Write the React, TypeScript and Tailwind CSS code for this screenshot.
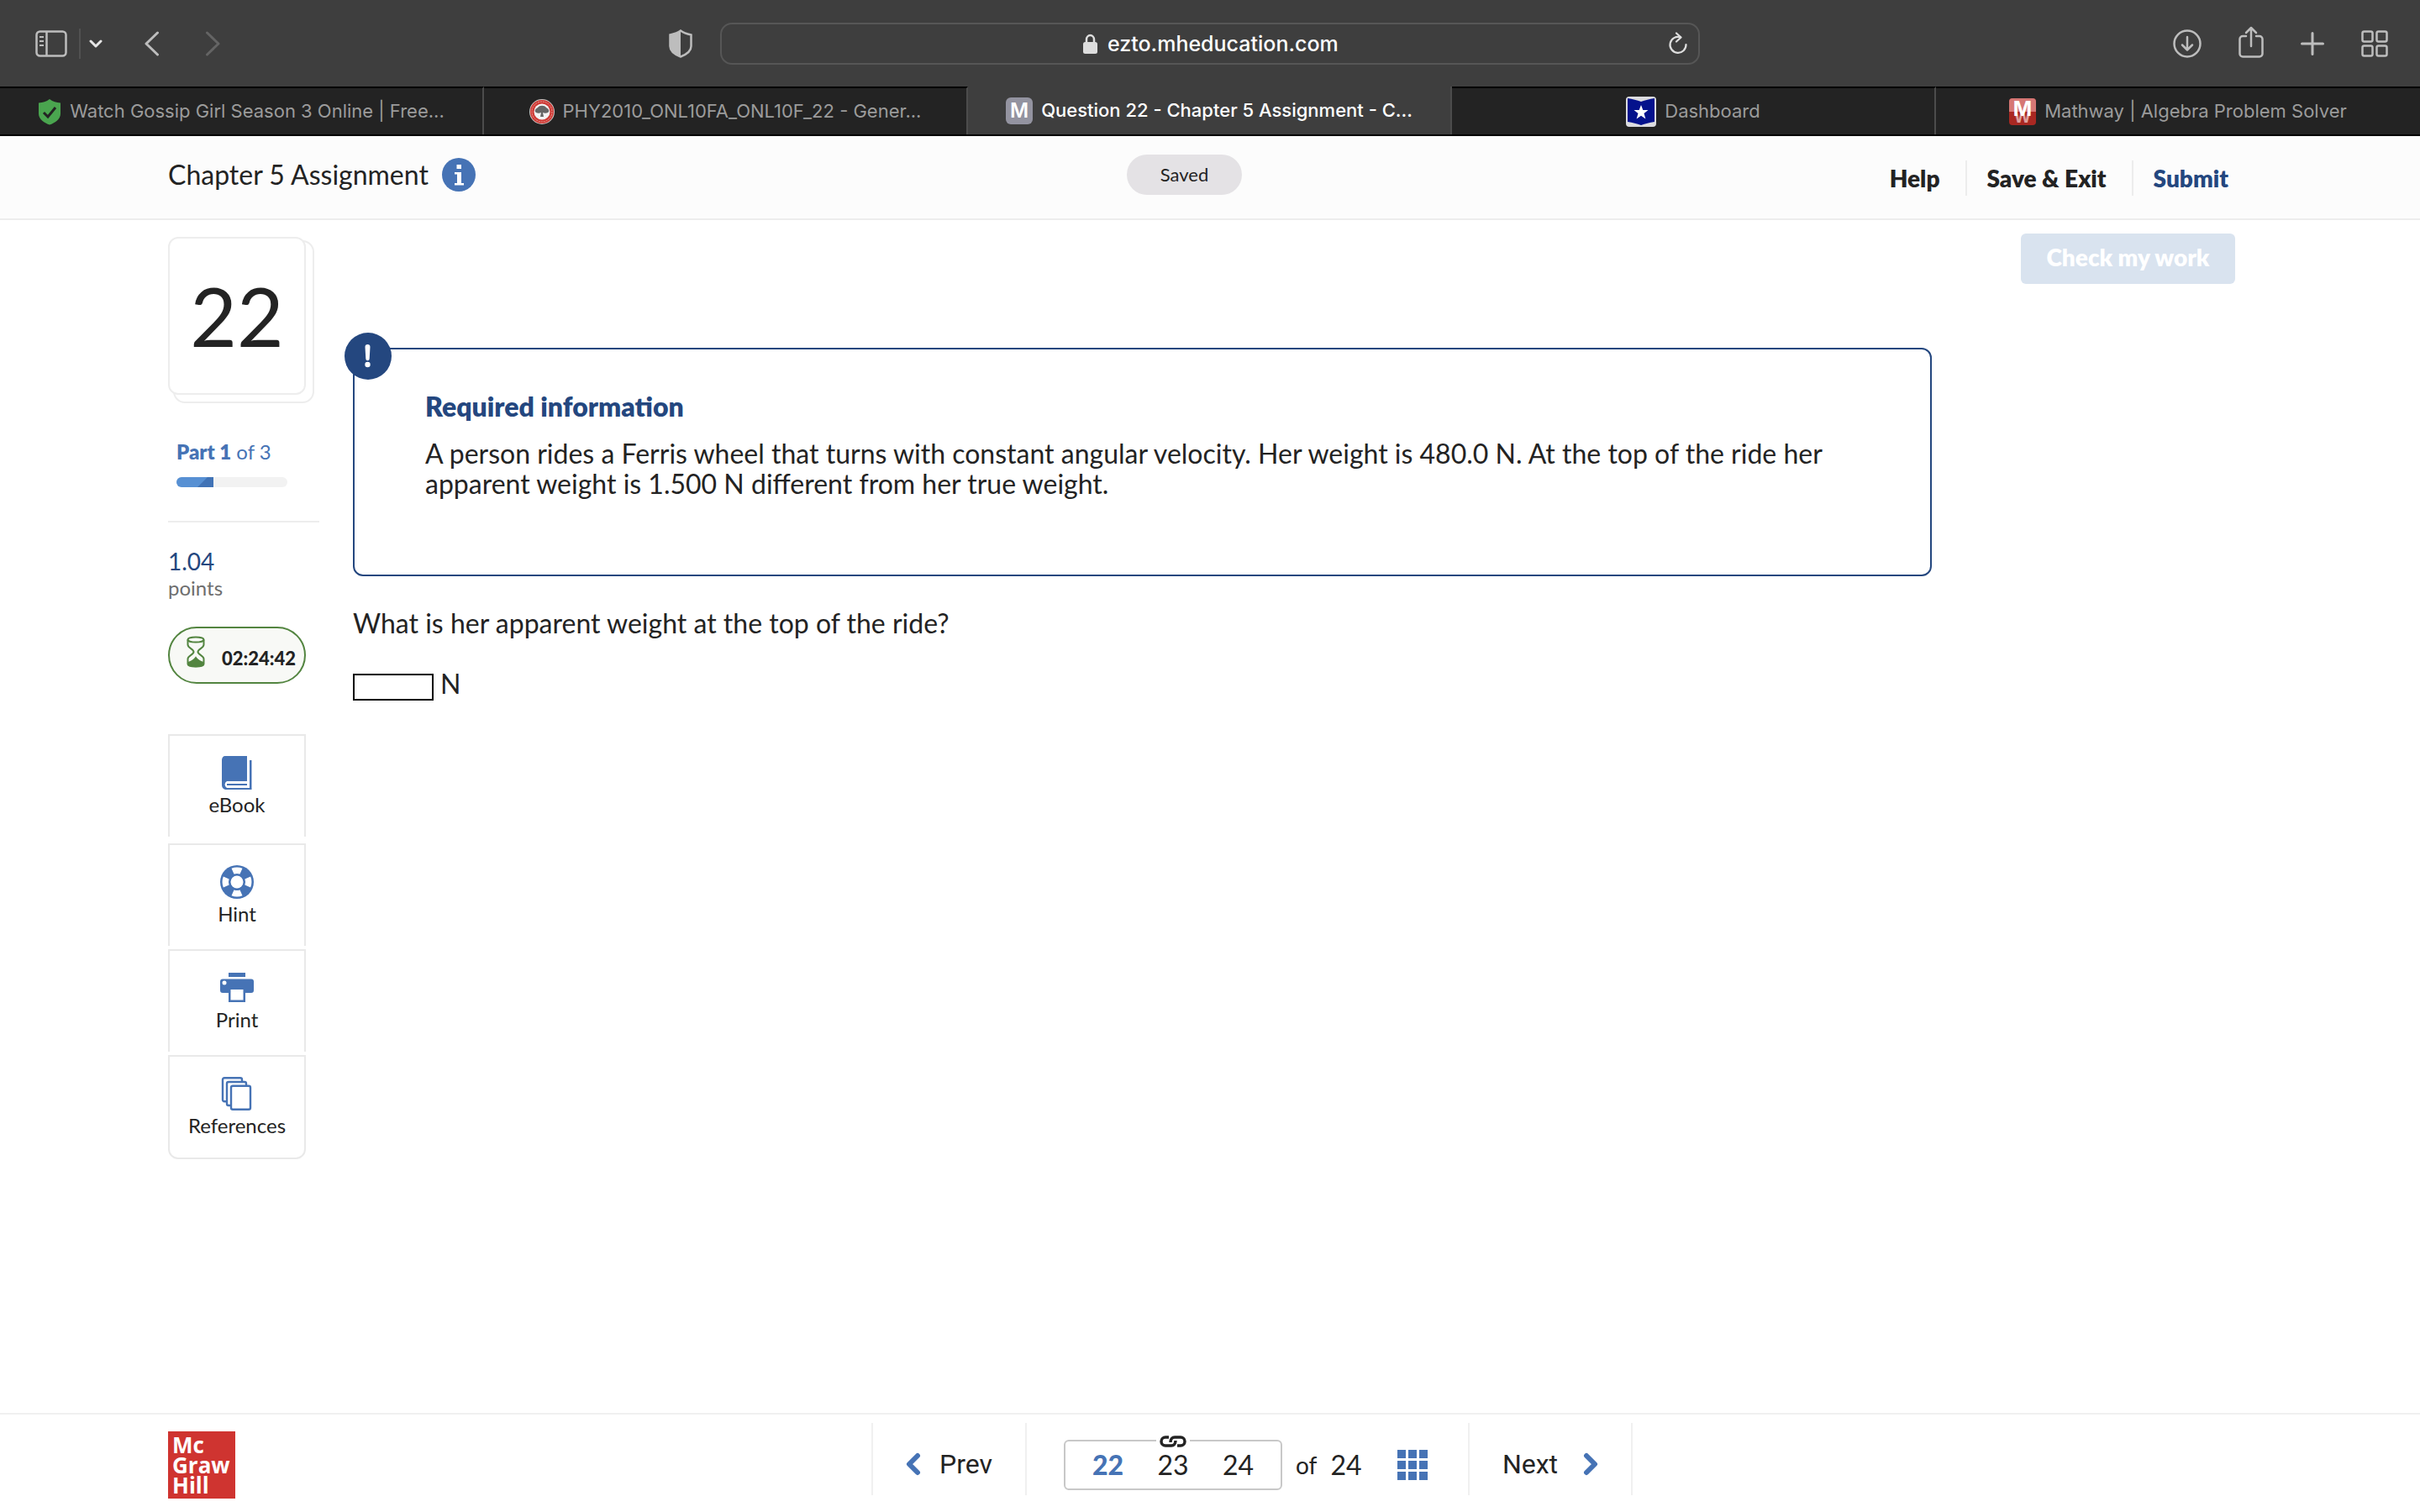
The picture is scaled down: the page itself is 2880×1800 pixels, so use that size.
import type { ReactNode } from 'react'
import clsx from 'clsx'

interface BrowserTab {
  title: string
  icon: ReactNode
  active?: boolean
}

const tabs: BrowserTab[] = [
  { title: 'Watch Gossip Girl Season 3 Online | Free...', icon: <ShieldCheckIcon /> },
  { title: 'PHY2010_ONL10FA_ONL10F_22 - Gener...', icon: <TreeSealIcon /> },
  {
    title: 'Question 22 - Chapter 5 Assignment - C...',
    icon: (
      <span className="flex size-8 items-center justify-center rounded-md bg-[#9393a0] text-[24px] leading-none font-semibold text-white">
        M
      </span>
    ),
    active: true,
  },
  { title: 'Dashboard', icon: <StarIcon /> },
  { title: 'Mathway | Algebra Problem Solver', icon: <MathwayIcon /> },
]

function ShieldCheckIcon() {
  return (
    <svg width="28" height="32" viewBox="0 0 28 32">
      <path d="M14 1c4 3 8 4 13 4.500v13C27 25 20 29.500 14 31.500 8 29.500 1 25 1 18.500v-13C6 5 10 4 14 1z" fill="#4aa54f" />
      <path d="M7 17l5 5 9-11" fill="none" stroke="#232323" strokeWidth="3" />
    </svg>
  )
}

function TreeSealIcon() {
  return (
    <svg width="30" height="30" viewBox="0 0 30 30">
      <circle cx="15" cy="15" r="15" fill="#c9c4c2" />
      <circle cx="15" cy="15" r="14" fill="#cf3a35" />
      <circle cx="15" cy="15" r="12" fill="none" stroke="#e59a96" strokeDasharray="2 1" />
      <circle cx="15" cy="15" r="9.500" fill="#f3f3f3" />
      <path d="M7 15c-1-2 1-4 3-5 2-3 8-3 10 0 2 1 4 3 3 5-1 2-5 2-7 1l1 5h-4l1-5c-2 1-6 1-7-1z" fill="#666" />
    </svg>
  )
}

function StarIcon() {
  return (
    <svg width="36" height="36" viewBox="0 0 36 36">
      <rect width="36" height="36" rx="4" fill="#dcdce0" />
      <path d="M2 2c6 1 11 2 16 4 5-2 10-3 16-4v28c-6 1-11 2-16 4-5-2-10-3-16-4z" fill="#04128c" />
      <path d="M18 10l2.300 6h6.200l-5 4 1.900 6.500L18 22.700l-5.400 3.800 1.900-6.500-5-4h6.200z" fill="#fff" />
    </svg>
  )
}

function MathwayIcon() {
  return (
    <svg width="32" height="32" viewBox="0 0 32 32">
      <rect width="32" height="32" rx="4" fill="#a92822" />
      <path d="M0 16V4a4 4 0 0 1 4-4h24a4 4 0 0 1 4 4v12z" fill="#d67774" />
      <g fontFamily="Inter" fontSize="24" fontWeight="700" textAnchor="middle">
        <text x="16" y="29" fontSize="20" fill="#dda09d">W</text>
        <text x="16" y="21" fill="#fff">M</text>
      </g>
    </svg>
  )
}

function IconButton({ label, className, children }: { label: string; className?: string; children: ReactNode }) {
  return (
    <button type="button" aria-label={label} className={clsx('flex items-center justify-center', className)}>
      {children}
    </button>
  )
}

function Toolbar() {
  return (
    <div className="flex h-[103px] items-center justify-between bg-[#3e3e3e] pr-[38px] pl-[42px] text-[#bdbdbd]">
      <div className="flex items-center">
        <IconButton label="Sidebar">
          <svg width="38" height="32" viewBox="0 0 38 32" fill="none" stroke="currentColor">
            <rect x="1.500" y="1.500" width="35" height="29" rx="4" strokeWidth="2.500" />
            <path d="M13.500 1.500v29" strokeWidth="2.500" />
            <path d="M5 8h5M5 13h5M5 18h5" strokeWidth="2" />
          </svg>
        </IconButton>
        <div className="ml-[14px] h-9 w-[2px] bg-[#515151]" />
        <IconButton label="Tab groups" className="ml-[10px] text-[#e6e6e6]">
          <svg width="16" height="12" viewBox="0 0 16 12" fill="none" stroke="currentColor" strokeWidth="3" strokeLinecap="round" strokeLinejoin="round">
            <path d="M2 3l6 6 6-6" />
          </svg>
        </IconButton>
        <IconButton label="Back" className="ml-[50px]">
          <svg width="18" height="30" viewBox="0 0 18 30" fill="none" stroke="currentColor" strokeWidth="3" strokeLinecap="round" strokeLinejoin="round">
            <path d="M15.500 2L2 15l13.500 13" />
          </svg>
        </IconButton>
        <IconButton label="Forward" className="ml-[54px] text-[#646464]">
          <svg width="18" height="30" viewBox="0 0 18 30" fill="none" stroke="currentColor" strokeWidth="3" strokeLinecap="round" strokeLinejoin="round">
            <path d="M2.500 2L16 15 2.500 28" />
          </svg>
        </IconButton>
      </div>

      <div className="flex items-center gap-[33px] pr-[30px]">
        <IconButton label="Privacy report">
          <svg width="28" height="34" viewBox="0 0 28 34">
            <path d="M14 1.500c4 3 8 4 12.500 5V20c0 6-6 10-12.500 12.500C7.500 30 1.500 26 1.500 20V6.500C6 5.500 10 4.500 14 1.500z" fill="none" stroke="currentColor" strokeWidth="2.500" />
            <path d="M14 1.500C10 4.500 6 5.500 1.500 6.500V20c0 6 6 10 12.500 12.500z" fill="currentColor" />
          </svg>
        </IconButton>
        <div className="flex h-[50px] w-[1166px] items-center rounded-[14px] border-2 border-[#565656] pr-3">
          <div className="flex flex-1 items-center justify-center gap-3 pl-12">
            <svg width="17" height="24" viewBox="0 0 17 24" className="text-[#dedede]">
              <path d="M4 11V7a4.500 5 0 0 1 9 0v4" fill="none" stroke="currentColor" strokeWidth="2.500" />
              <rect y="10" width="17" height="14" rx="2.500" fill="currentColor" />
            </svg>
            <input
              aria-label="Address"
              defaultValue="ezto.mheducation.com"
              className="w-[284px] bg-transparent text-[25px] leading-8 font-medium text-white outline-none"
            />
          </div>
          <IconButton label="Reload" className="text-[#dedede]">
            <svg width="24" height="28" viewBox="0 0 24 28" fill="none" stroke="currentColor" strokeWidth="2.200" strokeLinecap="round" strokeLinejoin="round">
              <path d="M15 6.300A9.500 9.500 0 1 0 21.500 15" />
              <path d="M10 1.500l5.500 5-5.500 5" />
            </svg>
          </IconButton>
        </div>
      </div>

      <div className="flex items-center gap-11">
        <IconButton label="Downloads">
          <svg width="34" height="34" viewBox="0 0 34 34" fill="none" stroke="currentColor" strokeWidth="2.500" strokeLinecap="round" strokeLinejoin="round">
            <circle cx="17" cy="17" r="15.500" />
            <path d="M17 9v15M11 18.500l6 6 6-6" />
          </svg>
        </IconButton>
        <IconButton label="Share" className="pb-1">
          <svg width="30" height="38" viewBox="0 0 30 38" fill="none" stroke="currentColor" strokeWidth="2.500" strokeLinecap="round" strokeLinejoin="round">
            <path d="M9 12H5a3.500 3.500 0 0 0-3.500 3.500V33A3.500 3.500 0 0 0 5 36.500h20a3.500 3.500 0 0 0 3.500-3.500V15.500A3.500 3.500 0 0 0 25 12h-4" />
            <path d="M15 24V2M9 8l6-6 6 6" />
          </svg>
        </IconButton>
        <IconButton label="New tab">
          <svg width="28" height="28" viewBox="0 0 28 28" fill="none" stroke="currentColor" strokeWidth="3" strokeLinecap="round">
            <path d="M14 1.500v25M1.500 14h25" />
          </svg>
        </IconButton>
        <IconButton label="Tab overview">
          <svg width="32" height="32" viewBox="0 0 32 32" fill="none" stroke="currentColor" strokeWidth="2.500">
            <rect x="1.500" y="1.500" width="12" height="12" rx="2" />
            <rect x="18.500" y="1.500" width="12" height="12" rx="2" />
            <rect x="1.500" y="18.500" width="12" height="12" rx="2" />
            <rect x="18.500" y="18.500" width="12" height="12" rx="2" />
          </svg>
        </IconButton>
      </div>
    </div>
  )
}

function TabBar() {
  return (
    <div className="grid h-[59px] grid-cols-5 border-b-2 border-black">
      {tabs.map((tab) => (
        <button
          key={tab.title}
          type="button"
          className={clsx(
            'flex items-center justify-center gap-[10px] border-r-2 border-r-[#4c4c4c] text-[22px] whitespace-nowrap last:border-r-0',
            tab.active
              ? 'bg-[#3e3e3e] font-medium text-white'
              : 'border-t-2 border-t-black bg-[#232323] text-[#9b9b9b]',
          )}
        >
          {tab.icon}
          <span>{tab.title}</span>
        </button>
      ))}
    </div>
  )
}

function AssignmentHeader() {
  return (
    <header className="grid h-[100px] grid-cols-[46%_auto_1fr] items-start border-b-2 border-[#ededed] bg-[#fcfcfc] px-[200px] pt-[22px]">
      <div className="flex h-12 items-center gap-4">
        <h1 className="text-[32px] leading-9">Chapter 5 Assignment</h1>
        <IconButton label="Assignment information">
          <svg width="40" height="40" viewBox="0 0 40 40">
            <circle cx="20" cy="20" r="20" fill="#4673b5" />
            <path d="M17.500 8h5.500v5h-5.500zM15 17h8v13h3v2.500H15V30h3V19.500h-3z" fill="#fff" />
          </svg>
        </IconButton>
      </div>
      <div className="flex h-12 items-center rounded-full bg-[#e4e2e5] px-10 pb-[2px] text-[22px]">Saved</div>
      <nav className="mt-2 flex h-10 items-center justify-end text-[28px] font-extrabold">
        <a href="#help" className="pr-[30px]">Help</a>
        <a href="#save" className="border-l-2 border-[#ededed] pr-[30px] pl-6">Save &amp; Exit</a>
        <a href="#submit" className="border-l-2 border-[#ededed] pr-7 pl-6 text-[#24477f]">Submit</a>
      </nav>
    </header>
  )
}

const tools = [
  {
    name: 'eBook',
    icon: (
      <svg width="40" height="40" viewBox="0 0 40 40">
        <path d="M6 0h26v30H8a4.500 4.500 0 0 0 0 8h27V5h2.500v35H8c-4 0-6-2-6-6V5c0-3 1.500-5 4-5z" fill="#4673b5" />
        <path d="M8 34h24" stroke="#4673b5" strokeWidth="2" />
      </svg>
    ),
  },
  {
    name: 'Hint',
    icon: (
      <svg width="40" height="40" viewBox="0 0 40 40">
        <circle cx="20" cy="20" r="20" fill="#4673b5" />
        <path d="M13.500 3.800a18 18 0 0 1 13 0l-3 6.800a10 10 0 0 0-7 0zM13.500 36.200a18 18 0 0 0 13 0l-3-6.800a10 10 0 0 1-7 0zM3.800 13.500a18 18 0 0 0 0 13l6.800-3a10 10 0 0 1 0-7zM36.200 13.500a18 18 0 0 1 0 13l-6.800-3a10 10 0 0 0 0-7z" fill="#fff" />
        <circle cx="20" cy="20" r="7.500" fill="#fff" />
      </svg>
    ),
  },
  {
    name: 'Print',
    icon: (
      <svg width="40" height="40" viewBox="0 0 40 40">
        <path d="M10 2h20v5H10zM3 9.500h34a3 3 0 0 1 3 3V23a3 3 0 0 1-3 3h-7v11H10V26H3a3 3 0 0 1-3-3V12.500a3 3 0 0 1 3-3z" fill="#4673b5" />
        <circle cx="5" cy="14" r="2.500" fill="#fff" />
        <path d="M12.500 22h15v12.500h-15z" fill="#fff" />
      </svg>
    ),
  },
  {
    name: 'References',
    icon: (
      <svg width="40" height="40" viewBox="0 0 40 40" fill="#fff" stroke="#4673b5" strokeWidth="2.400">
        <rect x="3" y="1.200" width="23" height="28" rx="2" />
        <rect x="8" y="6" width="23" height="28" rx="2" />
        <rect x="13" y="10.800" width="23" height="28" rx="2" />
      </svg>
    ),
  },
]

function Sidebar() {
  return (
    <aside className="w-[180px] shrink-0">
      <div className="relative h-[198px] w-[174px]">
        <div className="absolute inset-0 top-1 left-[6px] rounded-[14px] border-2 border-[#ededed]" />
        <div className="relative flex h-[188px] w-[164px] items-center justify-center rounded-xl border-2 border-[#ededed] bg-white text-[96px] leading-none">
          22
        </div>
      </div>

      <div className="mt-[42px] px-[10px] text-[24px] leading-8 text-[#4673b5]">
        <b className="font-extrabold">Part 1</b> of 3
      </div>
      <div className="mt-[14px] ml-[10px] h-3 w-[132px] overflow-hidden rounded-full bg-[#f2f2f2]">
        <svg width="44" height="12" viewBox="0 0 44 12">
          <path d="M0 0h44v12H0z" fill="#5790d3" />
          <path d="M37 0h7v12H25z" fill="#4173b6" />
        </svg>
      </div>

      <div className="mt-10 border-t-2 border-[#ededed] pt-[30px]">
        <div className="text-[28px] leading-8 text-[#24477f]">1.04</div>
        <div className="text-[24px] leading-8 text-[#6e6e6e]">points</div>
      </div>

      <div className="mt-[30px] flex h-[68px] w-[164px] items-center justify-between rounded-full border-2 border-[#538540] bg-[#f8f9f6] pr-[10px] pl-5">
        <svg width="22" height="38" viewBox="0 0 22 38" className="mb-2" fill="none" stroke="#538540" strokeWidth="2">
          <ellipse cx="11" cy="4.500" rx="9.500" ry="3" />
          <path d="M1.500 4.500v6c0 4 7 5 7 8.500s-7 4.500-7 8.500v6c0 4 19 4 19 0v-6c0-4-7-5-7-8.500s7-4.500 7-8.500v-6" />
          <path d="M2 32c3-1 6-2 9-6 3 4 6 5 9 6v2c-2 3-16 3-18 0z" fill="#538540" />
        </svg>
        <span className="pt-2 text-[22px] leading-none font-black">02:24:42</span>
      </div>

      <div className="mt-[60px] flex w-[164px] flex-col gap-1 text-[24px] leading-7">
        {tools.map((tool) => (
          <button
            key={tool.name}
            type="button"
            className="flex h-[122px] flex-col items-center border-2 border-b-0 border-[#e9e9e9] pt-6 first:mb-1 last:h-[124px] last:rounded-b-xl last:border-b-2"
          >
            {tool.icon}
            <span className="mt-1">{tool.name}</span>
          </button>
        ))}
      </div>
    </aside>
  )
}

function Question() {
  return (
    <main className="min-w-0 flex-1 pt-[132px] text-[32px] leading-9">
      <section className="relative min-h-[272px] rounded-xl border-2 border-[#24477f] px-[84px] pt-[50px]">
        <svg width="56" height="56" viewBox="0 0 56 56" className="absolute -top-5 -left-3">
          <circle cx="28" cy="28" r="28" fill="#24477f" />
          <path d="M24.500 17a3 3 0 0 1 6 0l-.8 14a2.200 2.200 0 0 1-4.400 0z" fill="#fff" />
          <circle cx="27.500" cy="38" r="3.200" fill="#fff" />
        </svg>
        <h2 className="font-extrabold text-[#24477f]">Required information</h2>
        <p className="mt-5">
          A person rides a Ferris wheel that turns with constant angular velocity. Her weight is 480.0 N. At the top of
          the ride her apparent weight is 1.500 N different from her true weight.
        </p>
      </section>

      <p className="mt-[38px]">What is her apparent weight at the top of the ride?</p>
      <label className="mt-9 flex items-start gap-2">
        <input type="text" className="mt-[6px] h-8 w-24 border-2 border-black px-2 text-[22px] outline-none" />
        N
      </label>
    </main>
  )
}

function Footer() {
  return (
    <footer className="flex items-start border-t-2 border-[#f0f0f0] pt-[10px] pr-[180px] pb-4 pl-[200px]">
      <p className="mt-[10px] size-20 bg-[#cf3430] px-[5px] pt-1 font-['Open_Sans'] text-[26px] leading-6 font-bold text-white">
        Mc
        <br />
        Graw
        <br />
        Hill
      </p>

      <nav className="mx-auto flex h-[86px] w-[906px] items-stretch text-[32px]">
        <button type="button" className="flex w-[185px] items-center justify-center gap-[22px] border-x-2 border-[#f0f0f0] pt-3 font-['Roboto']">
          <svg width="18" height="28" viewBox="0 0 18 28" fill="none" stroke="#4673b5" strokeWidth="6" strokeLinecap="round" strokeLinejoin="round">
            <path d="M14 4L4 14l10 10" />
          </svg>
          Prev
        </button>
        <div className="flex flex-1 items-center pt-[14px] pl-[44px]">
          <div className="relative flex h-[60px] w-[260px] items-center justify-between rounded-md border-2 border-[#c8c8c8] px-8">
            <button type="button" className="font-black text-[#4673b5]">22</button>
            <button type="button">23</button>
            <button type="button">24</button>
            <svg width="40" height="14" viewBox="0 0 40 14" className="absolute -top-[7px] left-[108px] bg-white" fill="none" stroke="#232323" strokeWidth="3.500">
              <path d="M15 2h-4a5 5 0 0 0 0 10h7c3 0 5-2.500 5-6" />
              <path d="M25 12h4a5 5 0 0 0 0-10h-7c-3 0-5 2.500-5 6" />
            </svg>
          </div>
          <span className="ml-4 text-[28px]">of</span>
          <span className="ml-4">24</span>
          <IconButton label="Question list" className="ml-[42px]">
            <svg width="36" height="36" viewBox="0 0 36 36" fill="#4673b5">
              <path d="M0 0h10v10H0zM13 0h10v10H13zM26 0h10v10H26zM0 13h10v10H0zM13 13h10v10H13zM26 13h10v10H26zM0 26h10v10H0zM13 26h10v10H13zM26 26h10v10H26z" />
            </svg>
          </IconButton>
        </div>
        <button type="button" className="flex w-[196px] items-center justify-center gap-[30px] border-x-2 border-[#f0f0f0] pt-3 font-['Roboto']">
          Next
          <svg width="18" height="28" viewBox="0 0 18 28" fill="none" stroke="#4673b5" strokeWidth="6" strokeLinecap="round" strokeLinejoin="round">
            <path d="M4 4l10 10L4 24" />
          </svg>
        </button>
      </nav>
    </footer>
  )
}

export default function App() {
  return (
    <div className="flex min-h-screen flex-col bg-white font-['Lato',sans-serif] text-[#232323]">
      <div className="font-['Inter',sans-serif]">
        <Toolbar />
        <TabBar />
      </div>
      <AssignmentHeader />
      <div className="flex flex-1 items-start pt-5 pr-[220px] pl-[200px]">
        <Sidebar />
        <div className="ml-10 flex min-w-0 flex-1">
          <Question />
        </div>
        <button
          type="button"
          disabled
          className="-mt-1 ml-[106px] h-[60px] w-[255px] rounded-md bg-[#d9e3ef] pb-1 text-[28px] font-extrabold text-white"
        >
          Check my work
        </button>
      </div>
      <Footer />
    </div>
  )
}
